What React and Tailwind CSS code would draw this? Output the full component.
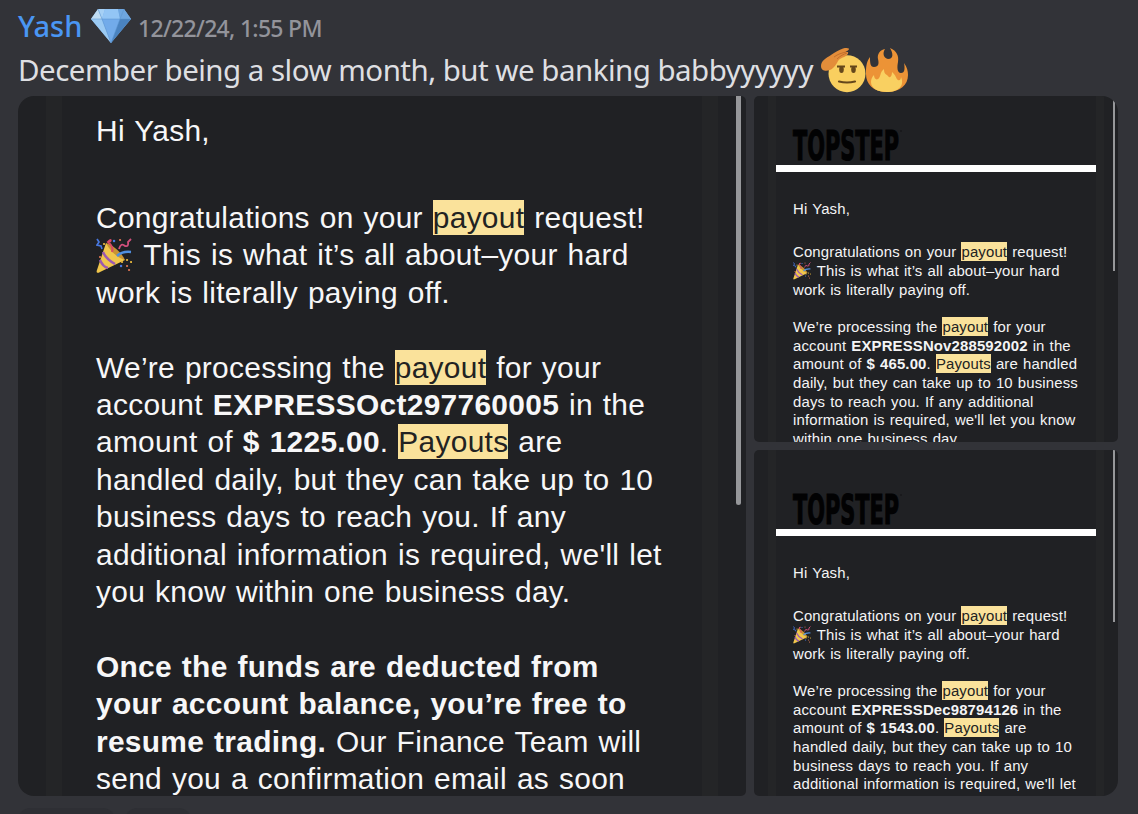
function Gem() {
  return (
    <svg width="40" height="34" viewBox="0 0 40 34">
      <path d="M7 0H33L40 10L20 34L0 10Z" fill="#78afe9" />
      <path d="M7 0L11 10H0Z" fill="#bfdcf3" />
      <path d="M7 0H14L11 10Z" fill="#a6d0f5" />
      <path d="M14 0H27L29 10H11Z" fill="#93c5f5" />
      <path d="M27 0H33L40 10H29Z" fill="#6ea6e0" />
      <path d="M0 10H11L20 34Z" fill="#9bcaf3" />
      <path d="M11 10H29L20 34Z" fill="#72abea" />
      <path d="M29 10H40L20 34Z" fill="#4a83c0" />
      <path d="M0 10H40M7 0L11 10L20 34L29 10L33 0" fill="none" stroke="#5b92cd" strokeWidth="0.5" />
    </svg>
  )
}

function Salute() {
  return (
    <svg width="45" height="45" viewBox="0 0 45 45">
      <circle cx="26" cy="25.7" r="18.5" fill="#f9cf5f" />
      <path d="M0 18C0 13 5 10 10 7C14 4 18 2 22 0.5C24 -0.5 28 0 28 1C28 2 26 3 24.5 4L27 4C28 7 23 9 19 11C16 13 16 17 12 20C8 24 0 24 0 18Z" fill="#e38d3a" />
      <path d="M13 9C17 6 21 5 25 4M16 11C19 8 23 6 26 5" stroke="#c06c2a" strokeWidth="0.9" fill="none" />
      <path d="M16 18.500H24M29 18.500H36" stroke="#65471b" strokeWidth="2" fill="none" />
      <ellipse cx="20.500" cy="21.5" rx="2.3" ry="3.5" fill="#65471b" />
      <ellipse cx="32.500" cy="21.5" rx="2.3" ry="3.5" fill="#65471b" />
      <path d="M18 33.500Q26 35.500 34 33.500" stroke="#65471b" strokeWidth="2.2" strokeLinecap="round" fill="none" />
    </svg>
  )
}

function Flame() {
  return (
    <svg width="42" height="45" viewBox="0 0 42 45">
      <path d="M21 44C7 44 0 36 0 26C0 20 0 14 4 9C4 14 4 19 8 19C13 19 13 15 12 11C11 6 14 2 19 1C16 6 18 10 22 11C28 11 27 5 24 0C31 3 33 8 32 14C31 19 31 25 35 25C39 25 39 20 38 15C41 19 42 23 42 27C42 37 34 44 21 44Z" fill="#ec9336" />
      <path d="M21 44C11 44 5 40 5 34C5 31 6 29 8 27C8 31 11 33 13 30C15 27 14 24 18 21C18 26 20 26 22 28C24 31 26 28 26 24C30 27 30 31 32 32C34 33 35 31 35 29C39 38 32 44 21 44Z" fill="#f9d061" />
    </svg>
  )
}

function Popper({ className }) {
  return (
    <svg className={className} viewBox="0 0 36 36">
      <path d="M10 5L29 22L4 34C1 36 0 34 1 32Z" fill="#f0c64c" />
      <path d="M10 5C17 7 26 15 29 22C24 21 14 14 10 5Z" fill="#c89432" />
      <path d="M7 14Q10 21 19 26M4 22Q7 29 12 30" stroke="#9b59b0" strokeWidth="2.5" fill="none" />
      <path d="M21 18Q26 13 35 14" stroke="#4f8fe0" strokeWidth="2.5" fill="none" />
      <path d="M16 14Q18 9 12 4Q16 0 14 4" stroke="#d84b65" strokeWidth="2" fill="none" />
      <path d="M23 11Q25 4 29 8Q33 9 32 4L35 1" stroke="#d4507c" strokeWidth="1.8" fill="none" />
      <path d="M1 1L3 4L1 7L5 8L6 11" stroke="#4777df" strokeWidth="1.7" fill="none" />
      <path d="M18 3h.1M25 28h.1" stroke="#4777df" strokeWidth="2.4" strokeLinecap="round" />
      <path d="M8 6h.1M31 22h.1M35 24h.1M26 24h.1" stroke="#e7b73d" strokeWidth="2.2" strokeLinecap="round" />
      <path d="M4 19h.1M31 28h.1M33 32h.1M24 2h.1" stroke="#dd7452" strokeWidth="2.2" strokeLinecap="round" />
    </svg>
  )
}

function Logo() {
  return (
    <svg className="-mt-2.5 -mb-2.5 block" width="112" height="52" viewBox="0 -10 112 52">
      <text
        x="1"
        y="30.5"
        textLength="106"
        lengthAdjust="spacingAndGlyphs"
        fill="#020203"
        stroke="#020203"
        strokeWidth="1.2"
        className="font-['DejaVu_Sans'] text-[41.5px] font-bold"
      >
        TOPSTEP
      </text>
      <circle cx="109" cy="2" r="0.8" fill="#111214" />
    </svg>
  )
}

function Mark({ children }) {
  return <span className="bg-[#fae29b] py-px text-[#222222]">{children}</span>
}

function Line({ children }) {
  return <div className="whitespace-nowrap">{children}</div>
}

function Intro({ popper }) {
  return (
    <>
      <Line>Congratulations on your <Mark>payout</Mark> request!</Line>
      <Line><Popper className={popper} /> This is what it’s all about–your hard</Line>
      <Line>work is literally paying off.</Line>
    </>
  )
}

function SmallShot({ account, amount, rest, tail, top, thumb, rounding }) {
  return (
    <div className={`relative h-[346px] overflow-hidden bg-[#202124] px-3.5 ${rounding}`}>
      <div className="h-full border-x-8 border-[#242527]">
        <div className={top}>
          <div className="pl-4"><Logo /></div>
          <div className="mt-1 h-[7px] bg-white" />
          <div className="pt-[28px] pl-[17px] font-['Liberation_Sans',sans-serif] text-[14.93px] leading-[18.65px] tracking-[0.15px] text-[#f4f4f5] [word-spacing:0.75px]">
            <Line>Hi Yash,</Line>
            <div className="h-[24.7px]" />
            <Intro popper="-my-1 mr-px inline-block size-[18px] align-[0px]" />
            <div className="h-[18.65px]" />
            <Line>We’re processing the <Mark>payout</Mark> for your</Line>
            <Line>account <b>{account}</b> in the</Line>
            <Line>amount of <b>$ {amount}</b>. <Mark>Payouts</Mark> {tail}</Line>
            {rest.map((line) => <Line key={line}>{line}</Line>)}
          </div>
        </div>
      </div>
      <div className={`absolute right-[3px] w-[2px] bg-[#96979a] ${thumb}`} />
    </div>
  )
}

const novRest = [
  'daily, but they can take up to 10 business',
  'days to reach you. If any additional',
  "information is required, we'll let you know",
  'within one business day.',
]

const decRest = [
  'handled daily, but they can take up to 10',
  'business days to reach you. If any',
  "additional information is required, we'll let",
]

export default function App() {
  return (
    <div className="h-[814px] w-[1138px] overflow-hidden bg-[#323338] pl-[18px] font-['Noto_Sans',sans-serif]">
      <div className="flex h-[52px] items-start whitespace-nowrap">
        <span className="w-[73px] pt-[6px] text-[29px] leading-10 font-medium text-[#4a96f3]">Yash</span>
        <span className="pt-[9px]"><Gem /></span>
        <span className="ml-[7px] pt-[8px] text-[23px] leading-10 font-medium tracking-[-0.7px] text-[#93949b]">12/22/24, 1:55 PM</span>
      </div>
      <div className="flex h-11 whitespace-nowrap">
        <span className="w-[803px] text-[29.5px] leading-[36px] tracking-[-0.52px] text-[#dedfe2]">December being a slow month, but we banking babbyyyyyy</span>
        <span className="-mt-1 flex"><Salute /><Flame /></span>
      </div>

      <div className="flex gap-2">
        <div className="relative h-[700px] w-[728px] overflow-hidden rounded-l-[16px] rounded-r-[5px] bg-[#202124] px-7">
          <div className="h-full border-x-16 border-[#242527] pt-4 pl-[34px] font-['Liberation_Sans',sans-serif] text-[29.9px] leading-[37.4px] tracking-[0.3px] text-[#f7f7f8] [word-spacing:1.3px]">
            <Line>Hi Yash,</Line>
            <div className="h-[49.6px]" />
            <Intro popper="-my-2 mr-0.5 inline-block size-9 align-[-1px]" />
            <div className="h-[37.4px]" />
            <Line>We’re processing the <Mark>payout</Mark> for your</Line>
            <Line>account <b>EXPRESSOct297760005</b> in the</Line>
            <Line>amount of <b>$ 1225.00</b>. <Mark>Payouts</Mark> are</Line>
            <Line>handled daily, but they can take up to 10</Line>
            <Line>business days to reach you. If any</Line>
            <Line>additional information is required, we'll let</Line>
            <Line>you know within one business day.</Line>
            <div className="h-[37.4px]" />
            <Line><b>Once the funds are deducted from</b></Line>
            <Line><b>your account balance, you’re free to</b></Line>
            <Line><b>resume trading.</b> Our Finance Team will</Line>
            <Line>send you a confirmation email as soon</Line>
          </div>
          <div className="absolute top-0 right-[5px] h-[409px] w-[5px] rounded-b-full bg-[#96979a]" />
        </div>

        <div className="flex w-[364px] flex-col gap-2">
          <SmallShot
            account="EXPRESSNov288592002"
            amount="465.00"
            tail="are handled"
            rest={novRest}
            top="pt-[33px]"
            thumb="top-1 h-[171px]"
            rounding="rounded-[5px] rounded-tr-[16px]"
          />
          <SmallShot
            account="EXPRESSDec98794126"
            amount="1543.00"
            tail="are"
            rest={decRest}
            top="pt-[43px]"
            thumb="top-0 h-[172px]"
            rounding="rounded-[5px] rounded-br-[16px]"
          />
        </div>
      </div>

      <div className="mt-3 flex gap-2.5">
        <div className="h-8 w-[97px] rounded-xl bg-[#2e2f34]" />
        <div className="h-8 w-[66px] rounded-xl bg-[#2e2f34]" />
      </div>
    </div>
  )
}
